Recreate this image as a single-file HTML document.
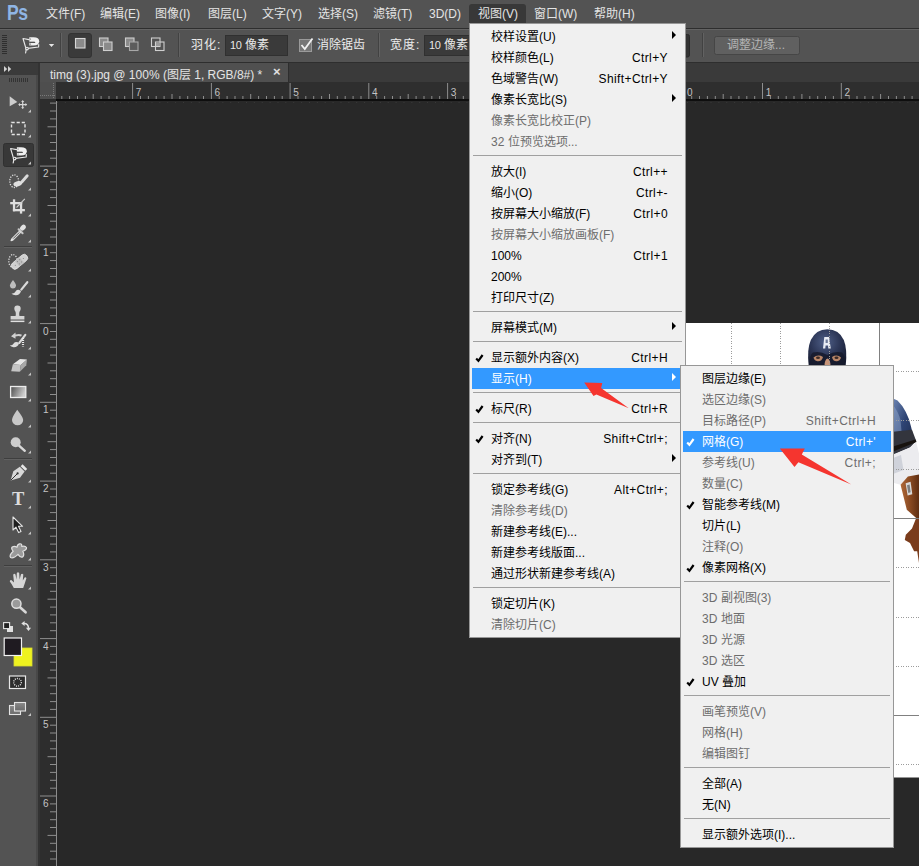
<!DOCTYPE html>
<html lang="zh-CN">
<head>
<meta charset="utf-8">
<title>Photoshop - 视图 - 显示 - 网格</title>
<style>
*{box-sizing:border-box;margin:0;padding:0}
html,body{width:919px;height:866px;overflow:hidden;background:#282828}
body{font-family:"Liberation Sans",sans-serif;font-size:12px;color:#dcdcdc;position:relative}
#app{position:absolute;left:0;top:0;width:919px;height:866px;overflow:hidden;background:#282828}
.abs{position:absolute}
/* ---------- menubar ---------- */
#menubar{position:absolute;left:0;top:0;width:919px;height:29px;background:#535353;border-bottom:1px solid #2e2e2e}
#menubar .mi{position:absolute;top:0;height:28px;line-height:29px;color:#e4e4e4;font-size:12px;white-space:nowrap;letter-spacing:0}
#ps{position:absolute;left:7px;top:1px;font-size:22px;font-weight:bold;color:#8fb5e4;letter-spacing:-0.5px;line-height:24px;transform:scaleX(0.8);transform-origin:0 0}
#mactive{position:absolute;left:469px;top:4px;width:57px;height:21px;background:#383838;border-radius:3px 3px 0 0}
/* ---------- options bar ---------- */
#optbar{position:absolute;left:0;top:29px;width:919px;height:34px;background:#535353;border-top:1px solid #636363;border-bottom:1px solid #2e2e2e}
#optbar .lbl{position:absolute;top:0;height:32px;line-height:32px;color:#ececec;white-space:nowrap}
.inp{position:absolute;top:5px;height:21px;background:#3a3a3a;border:1px solid #303030;color:#e8e8e8;line-height:19px;padding-left:4px;white-space:nowrap;overflow:hidden}
/* ---------- tab bar ---------- */
#tabbar{position:absolute;left:40px;top:63px;width:879px;height:19px;background:#3a3a3a}
#tab{position:absolute;left:0;top:0;width:249px;height:19px;background:#505050;color:#e4e4e4;line-height:24px;padding-left:10px;white-space:nowrap;border-right:1px solid #2e2e2e}
/* ---------- toolbox ---------- */
#toolbox{position:absolute;left:0;top:62px;width:39px;height:804px;background:#535353;border-right:1px solid #3a3a3a}
/* ---------- rulers ---------- */
/* ---------- menus ---------- */
.menu{position:absolute;background:#f0f0f0;border:1px solid #979797;padding:2px;color:#000;font-size:12px}
.menu .it{position:relative;height:21px;line-height:22px;white-space:nowrap}
.menu .it .t{position:absolute;left:19px;top:0}
.menu .it .k{position:absolute;right:15px;top:0;letter-spacing:0.4px}
.menu .it.dis{color:#6d6d6d}
.menu .it.hl{background:#3399ff;color:#fff}
.menu .sep{position:relative;height:9px}
.menu .sep:before{content:"";position:absolute;left:1px;right:1px;top:3px;height:1px;background:#a0a0a0}
.menu .ar{position:absolute;right:7px;top:5px;width:0;height:0;border-left:4px solid #000;border-top:4px solid transparent;border-bottom:4px solid transparent}
.menu .it.hl .ar{border-left-color:#fff}
.menu .ck{position:absolute;left:3px;top:6px;width:10px;height:10px}
</style>
</head>
<body>
<div id="app">

<!-- canvas image -->
<svg class="abs" style="left:683px;top:322px" width="236" height="457" viewBox="683 322 236 457">
<rect x="683" y="323" width="236" height="454.500" fill="#fff"/>
<defs><radialGradient id="hg" cx="0.45" cy="0.35" r="0.7"><stop offset="0" stop-color="#4f5f88"/><stop offset="0.55" stop-color="#2c3656"/><stop offset="1" stop-color="#171c30"/></radialGradient>
<linearGradient id="sh" x1="0" y1="0" x2="1" y2="1"><stop offset="0" stop-color="#6d86b4"/><stop offset="0.5" stop-color="#2e4474"/><stop offset="1" stop-color="#1d2b4c"/></linearGradient>
<linearGradient id="gl" x1="0" y1="0" x2="1" y2="0"><stop offset="0" stop-color="#b06a3a"/><stop offset="0.5" stop-color="#8a4a22"/><stop offset="1" stop-color="#5e2e12"/></linearGradient></defs>
<path d="M808.700 366 Q806.800 349 810.800 340 Q816 329.200 827.300 329.200 Q839 329.200 843.800 340 Q847.500 349 845.700 366 Z" fill="url(#hg)"/><path d="M809.500 366 Q809.500 354 813 352.500 Q820 350.500 827.300 355 Q835 350.500 842 352.500 Q845 354 845 366Z" fill="#161a2b" opacity=".85"/>
<path d="M823 348.500 L824.300 337 H829 L830.800 348.500 H828.300 L828 345.500 H825.600 L825.300 348.500Z" fill="#e8ecf4"/><rect x="825.600" y="339.500" width="2.200" height="3.500" fill="#6f7c9a"/>
<path d="M813.500 357.500 Q818 353.800 823 357 Q822 361.500 817.500 361.200 Q814 360.500 813.500 357.500Z" fill="#b98668"/><path d="M832 357 Q837 353.800 841 357.500 Q840.500 360.500 837 361.200 Q832.800 361.500 832 357Z" fill="#b98668"/>
<ellipse cx="818" cy="357.800" rx="2" ry="1.300" fill="#3a2a26"/><ellipse cx="836.500" cy="357.800" rx="2" ry="1.300" fill="#3a2a26"/>
<path d="M824.500 366 Q824.500 359.500 827.500 358.500 Q830.500 359.500 830.500 366Z" fill="#c79478"/>
<path d="M893 398.500 L897.500 400.600 Q903 406 905.800 412 Q909.500 419 911 426.600 L914.100 440.100 L893 446 Z" fill="url(#sh)"/>
<path d="M893 405 Q898 411 900.500 420 L901.500 431 L893 433Z" fill="#8aa0c6" opacity=".55"/>
<path d="M893 431.800 L912 429.700 L916.200 441.100 L910 447.400 L893 455 Z" fill="#33353d"/>
<path d="M893 446.500 L915.500 439.500 L916.500 442 L893 451.500Z" fill="#17130f"/>
<path d="M893 454.600 L910 447.400 L916.200 442.200 L919 453.600 V477 L907.900 477.500 L900.600 484.800 L893 482.700Z" fill="#ececef"/>
<path d="M893 458 L901 455 L903.500 470 L893 474Z" fill="#cfd2da"/>
<path d="M900.600 484.800 L907.900 476.500 L919 474.400 V518 H916.200 L906.800 509.700 Z" fill="url(#gl)"/>
<path d="M905.600 483.200 L910.600 481.800 L912.300 494.200 L907.600 495.600Z" fill="#d9d9d9"/><path d="M907 485.200 L909.600 484.500 L910.600 492.200 L908.300 492.900Z" fill="#7d7d7d"/>
<path d="M916.200 518 H919 V563 L917.200 551.300 L914.100 551.300 L910 543 L904.800 539.900 L905.800 534.700 L912 528.500Z" fill="#7a3c1c"/>
<path d="M731.5 323V777.500M780.7 323V777.500M829.9 323V777.500M683 371.0H919M683 420.2H919M683 469.4H919M683 567.9H919M683 617.1H919M683 666.3H919M683 764.7H919" stroke="#9c9c9c" stroke-width="1" stroke-dasharray="1 1.500" fill="none" shape-rendering="crispEdges"/>
<path d="M879.1 323V777.500M683 518.6H919M683 715.5H919" stroke="#808080" stroke-width="1" fill="none" shape-rendering="crispEdges"/>
</svg>

<!-- rulers -->
<svg class="abs" style="left:40px;top:82px" width="879" height="784" viewBox="40 82 879 784">
<rect x="40" y="99" width="16" height="767" fill="#2d2d2d"/>
<rect x="56" y="101" width="1" height="765" fill="#8c8c8c"/>
<path d="M50 103.1H56M50 111.0H56M50 118.9H56M47.500 126.8H56M50 134.6H56M50 142.5H56M50 150.4H56M50 158.2H56M40 166.1H56M50 174.0H56M50 181.9H56M50 189.7H56M50 197.6H56M47.500 205.5H56M50 213.4H56M50 221.2H56M50 229.1H56M50 237.0H56M40 244.9H56M50 252.7H56M50 260.6H56M50 268.5H56M50 276.4H56M47.500 284.2H56M50 292.1H56M50 300.0H56M50 307.9H56M50 315.7H56M40 323.6H56M50 331.5H56M50 339.3H56M50 347.2H56M50 355.1H56M47.500 363.0H56M50 370.8H56M50 378.7H56M50 386.6H56M50 394.5H56M40 402.3H56M50 410.2H56M50 418.1H56M50 426.0H56M50 433.8H56M47.500 441.7H56M50 449.6H56M50 457.5H56M50 465.3H56M50 473.2H56M40 481.1H56M50 489.0H56M50 496.8H56M50 504.7H56M50 512.6H56M47.500 520.5H56M50 528.3H56M50 536.2H56M50 544.1H56M50 551.9H56M40 559.8H56M50 567.7H56M50 575.6H56M50 583.4H56M50 591.3H56M47.500 599.2H56M50 607.1H56M50 614.9H56M50 622.8H56M50 630.7H56M40 638.6H56M50 646.4H56M50 654.3H56M50 662.2H56M50 670.1H56M47.500 677.9H56M50 685.8H56M50 693.7H56M50 701.6H56M50 709.4H56M40 717.3H56M50 725.2H56M50 733.0H56M50 740.9H56M50 748.8H56M47.500 756.7H56M50 764.5H56M50 772.4H56M50 780.3H56M50 788.2H56M40 796.0H56M50 803.9H56M50 811.8H56M50 819.7H56M50 827.5H56M47.500 835.4H56M50 843.3H56M50 851.2H56M50 859.0H56" stroke="#8e8e8e" stroke-width="1"/>
<g font-family="Liberation Sans,sans-serif" font-size="10" fill="#c4c4c4"><text x="43" y="177.1">2</text><text x="43" y="255.9">1</text><text x="43" y="334.6">0</text><text x="43" y="413.3">1</text><text x="43" y="492.1">2</text><text x="43" y="570.8">3</text><text x="43" y="649.6">4</text><text x="43" y="728.3">5</text><text x="43" y="807.0">6</text></g>
<rect x="40" y="82" width="879" height="17" fill="#2e2e2e"/>
<rect x="56" y="99" width="863" height="2" fill="#0e0e0e"/>
<rect x="40" y="82" width="16" height="17" fill="#4e4e4e"/><path d="M53.500 83V99M40 95.500H56" stroke="#7a7a7a" stroke-width="1" stroke-dasharray="1 1" fill="none"/>
<path d="M61.8 96V99M69.6 96V99M77.5 96V99M85.4 96V99M93.2 94V99M101.1 96V99M109.0 96V99M116.9 96V99M124.7 96V99M132.6 83V99M140.5 96V99M148.4 96V99M156.2 96V99M164.1 96V99M172.0 94V99M179.9 96V99M187.7 96V99M195.6 96V99M203.5 96V99M211.4 83V99M219.2 96V99M227.1 96V99M235.0 96V99M242.9 96V99M250.7 94V99M258.6 96V99M266.5 96V99M274.4 96V99M282.2 96V99M290.1 83V99M298.0 96V99M305.8 96V99M313.7 96V99M321.6 96V99M329.5 94V99M337.3 96V99M345.2 96V99M353.1 96V99M361.0 96V99M368.8 83V99M376.7 96V99M384.6 96V99M392.5 96V99M400.3 96V99M408.2 94V99M416.1 96V99M424.0 96V99M431.8 96V99M439.7 96V99M447.6 83V99M455.5 96V99M463.3 96V99M471.2 96V99M479.1 96V99M486.9 94V99M494.8 96V99M502.7 96V99M510.6 96V99M518.4 96V99M526.3 83V99M534.2 96V99M542.1 96V99M549.9 96V99M557.8 96V99M565.7 94V99M573.6 96V99M581.4 96V99M589.3 96V99M597.2 96V99M605.1 83V99M612.9 96V99M620.8 96V99M628.7 96V99M636.6 96V99M644.4 94V99M652.3 96V99M660.2 96V99M668.1 96V99M675.9 96V99M683.8 83V99M691.7 96V99M699.5 96V99M707.4 96V99M715.3 96V99M723.2 94V99M731.0 96V99M738.9 96V99M746.8 96V99M754.7 96V99M762.5 83V99M770.4 96V99M778.3 96V99M786.2 96V99M794.0 96V99M801.9 94V99M809.8 96V99M817.7 96V99M825.5 96V99M833.4 96V99M841.3 83V99M849.2 96V99M857.0 96V99M864.9 96V99M872.8 96V99M880.6 94V99M888.5 96V99M896.4 96V99M904.3 96V99M912.1 96V99" stroke="#8e8e8e" stroke-width="1"/>
<g font-family="Liberation Sans,sans-serif" font-size="10" fill="#c4c4c4"><text x="135.8" y="96">7</text><text x="214.6" y="96">6</text><text x="293.3" y="96">5</text><text x="372.0" y="96">4</text><text x="450.8" y="96">3</text><text x="529.5" y="96">2</text><text x="608.3" y="96">1</text><text x="687.0" y="96">0</text><text x="765.7" y="96">1</text><text x="844.5" y="96">2</text></g>
<path d="M57 102.500H919" stroke="#3a3a3a" stroke-width="1" stroke-dasharray="1 6.874"/>
</svg>

<!-- tab bar -->
<div id="tabbar"><div id="tab">timg (3).jpg @ 100% (图层 1, RGB/8#) *<span style="position:absolute;left:233px;top:-3px;font-size:13px;font-weight:bold;color:#e0e0e0">×</span></div></div>

<!-- toolbox -->
<div id="toolbox"></div>
<div class="abs" style="left:36px;top:75px;width:2px;height:791px;background:#484848"></div>
<div class="abs" style="left:38px;top:62px;width:2px;height:804px;background:#333"></div>
<svg class="abs" style="left:0;top:62px" width="40" height="804" viewBox="0 62 40 804">
<rect x="0" y="63" width="38" height="12" fill="#3a3a3a"/>
<path d="M4 66 l3.2 3 l-3.2 3 z M8 66 l3.2 3 l-3.2 3 z" fill="#d0d0d0"/>
<g stroke="#333" stroke-width="1"><path d="M9.5 78 v4"/><path d="M11.5 78 v4"/><path d="M13.5 78 v4"/><path d="M15.5 78 v4"/><path d="M17.5 78 v4"/><path d="M19.5 78 v4"/><path d="M21.5 78 v4"/><path d="M23.5 78 v4"/><path d="M25.5 78 v4"/><path d="M27.5 78 v4"/></g>
<path d="M9.7 96.3 L17.3 101.9 L9.7 106.2 Z" fill="#cdcdcd"/>
<g stroke="#d6d6d6" stroke-width="1.2" fill="#d6d6d6"><path d="M19 104.6 H26.4 M22.7 100.9 V108.3"/><path d="M18.2 104.6 l1.8 -1.6 v3.2z M27.2 104.6 l-1.8 -1.6 v3.2z M22.7 100.1 l-1.6 1.8 h3.2z M22.7 109.1 l-1.6 -1.8 h3.2z" stroke="none"/></g>
<path d="M31 109.4 V112.4 H28 Z" fill="#c4c4c4"/>
<rect x="11.5" y="122.5" width="13.5" height="12" fill="none" stroke="#e4e4e4" stroke-width="1.4" stroke-dasharray="3.2 1.9"/>
<path d="M31 134.4 V137.4 H28 Z" fill="#c4c4c4"/>
<rect x="3.5" y="143.500" width="30" height="23" rx="2" fill="#383838" stroke="#303030"/>
<g transform="translate(-12.4 110)"><g fill="none" stroke="#e8e8e8" stroke-width="1.15" stroke-linejoin="round" stroke-linecap="round"><path d="M29 39.6 L23 38.5 L26 48.6 L38.600 47 L38.700 44.500"/><path d="M26.300 48.800 L25.600 53"/><circle cx="27" cy="48.500" r="1.300" fill="#383838"/></g><path d="M29.300 37.200 H33.500 Q39.200 37.200 39.200 41.200 Q39.200 45.400 33.500 45.400 H29.300 Z" fill="#f0f0f0"/><path d="M29.300 41.700 H34.500 Q36 42 35 42.800 H29.300Z" fill="#1c1c1c"/><circle cx="30.500" cy="39" r=".6" fill="#666"/><circle cx="30.500" cy="44" r=".6" fill="#666"/></g>
<path d="M31 161.4 V164.4 H28 Z" fill="#c4c4c4"/>
<ellipse cx="14.2" cy="181.2" rx="4.4" ry="6.3" fill="none" stroke="#e0e0e0" stroke-width="1.3" stroke-dasharray="1.2 1.3"/>
<path d="M27.200 175.800 L22 181.800" stroke="#dadada" stroke-width="2.900" stroke-linecap="round"/>
<ellipse cx="17.800" cy="183.700" rx="4.500" ry="2.500" transform="rotate(-14 17.800 183.700)" fill="#dedede"/>
<path d="M31 187.4 V190.4 H28 Z" fill="#c4c4c4"/>
<g fill="#dedede"><rect x="12.9" y="199.3" width="2.3" height="12"/><rect x="10.2" y="202" width="12" height="2.3"/><rect x="19.9" y="202" width="2.3" height="11.6"/><rect x="12.9" y="209" width="12" height="2.300"/></g><path d="M24.800 198.800 L16.500 207.500" stroke="#d0d0d0" stroke-width="1.1"/>
<path d="M31 213.4 V216.4 H28 Z" fill="#c4c4c4"/>
<g stroke-linecap="round"><path d="M23.6 227 L22.2 228.400" stroke="#e2e2e2" stroke-width="4.600"/><path d="M18.600 229.300 L22.600 233.300" stroke="#c8c8c8" stroke-width="2"/><path d="M19.8 232 L12.3 239.500" stroke="#d8d8d8" stroke-width="2.800"/><path d="M19 232.800 L13.500 238.300" stroke="#555" stroke-width="0.900"/><path d="M12 239.800 L11.200 240.600" stroke="#e8e8e8" stroke-width="1.400"/></g>
<path d="M31 239.4 V242.4 H28 Z" fill="#c4c4c4"/>
<path d="M4 246.500 H32" stroke="#3e3e3e"/><path d="M4 247.500 H32" stroke="#616161"/>
<ellipse cx="13" cy="261" rx="4.2" ry="6.4" fill="none" stroke="#e0e0e0" stroke-width="1.3" stroke-dasharray="1.2 1.3"/>
<g transform="rotate(-40 19.500 261.800)"><rect x="10" y="258.300" width="19" height="7" rx="3.400" fill="#cfcfcf" stroke="#e4e4e4" stroke-width="0.800"/><rect x="16.500" y="258.300" width="6" height="7" fill="#bdbdbd"/><g fill="#777"><circle cx="18" cy="260.300" r=".5"/><circle cx="21" cy="260.300" r=".5"/><circle cx="18" cy="263.300" r=".5"/><circle cx="21" cy="263.300" r=".5"/><circle cx="24.500" cy="261.800" r=".5"/><circle cx="14" cy="261.800" r=".5"/></g></g>
<path d="M31 268.4 V271.4 H28 Z" fill="#c4c4c4"/>
<path d="M13 280 Q16.500 284.500 16 286 A3.100 3.100 0 0 1 9.900 286 Q9.600 284.500 13 280Z" fill="#bdbdbd"/>
<path d="M27.300 282.200 L21.300 289.600" stroke="#dadada" stroke-width="2.200" stroke-linecap="round"/>
<path d="M11.500 293.800 Q15 293.300 16.800 290 Q19.500 289 21 291.200 Q19.500 295.500 15.500 295.200 Q13 295 11.500 293.800Z" fill="#dcdcdc"/>
<path d="M31 294.4 V297.4 H28 Z" fill="#c4c4c4"/>
<path d="M17.600 305.600 a3.100 3.100 0 0 1 3.100 3.100 q0 1.600 -1.300 3.200 q-.5 1.800 0 4.200 h5 v3.300 h-13.800 v-3.300 h5 q.5 -2.400 0 -4.200 q-1.300 -1.600 -1.300 -3.200 a3.100 3.100 0 0 1 3.300 -3.100z" fill="#d4d4d4"/><rect x="10.600" y="320.600" width="13.800" height="1.500" fill="#e0e0e0"/>
<path d="M31 320.4 V323.4 H28 Z" fill="#c4c4c4"/>
<path d="M11 336.300 l4.500 -3.800 v2 q4 -1.200 6.500 .3 l-1 1.600 q-2.500 -1 -5.500 0 v2.300z" fill="#d0d0d0"/>
<path d="M25.300 334.800 L19.300 342.800" stroke="#dadada" stroke-width="2.200" stroke-linecap="round"/>
<path d="M9.800 345.600 Q13 345.300 14.800 342.300 Q17.500 341.200 19 343.400 Q17.500 347.500 13.500 347.200 Q11 347 9.800 345.600Z" fill="#dcdcdc"/>
<path d="M23 338 V346.500" stroke="#e8e8e8" stroke-width="2.200" stroke-dasharray="1 1"/>
<path d="M31 346.4 V349.4 H28 Z" fill="#c4c4c4"/>
<path d="M12.900 364.300 L20 359 L27 359.600 L20.800 364.900Z" fill="#e6e6e6"/><path d="M12.900 364.300 L20.800 364.900 L19.800 371.800 L11.200 371.200Z" fill="#c4c4c4"/><path d="M20.800 364.900 L27 359.600 L26.300 365.300 L19.800 371.800Z" fill="#a8a8a8"/>
<path d="M31 372.4 V375.4 H28 Z" fill="#c4c4c4"/>
<defs><linearGradient id="gr" x1="0" y1="0" x2="1" y2="0.300"><stop offset="0" stop-color="#4a4a4a"/><stop offset="1" stop-color="#cfcfcf"/></linearGradient></defs><rect x="10.600" y="386.500" width="15.200" height="11" fill="url(#gr)" stroke="#ececec" stroke-width="1.300"/>
<path d="M31 398.4 V401.4 H28 Z" fill="#c4c4c4"/>
<path d="M17.200 409.800 Q23.300 417.500 23.200 420 A5.600 5.200 0 0 1 12 420 Q11.800 417.500 17.200 409.800Z" fill="#c8c8c8"/>
<path d="M31 424.4 V427.4 H28 Z" fill="#c4c4c4"/>
<path d="M19 445.600 L24.800 450.800" stroke="#d8d8d8" stroke-width="2.400" stroke-linecap="round"/><circle cx="15.700" cy="442.200" r="5" fill="#cdcdcd"/>
<path d="M31 450.4 V453.4 H28 Z" fill="#c4c4c4"/>
<path d="M4 458.500 H32" stroke="#3e3e3e"/><path d="M4 459.500 H32" stroke="#616161"/>
<path d="M10.600 480.400 L13.300 471.300 L19.800 466.800 L24.600 471.600 L20 477.800 Z" fill="#d8d8d8"/><path d="M20.600 466.200 L22.600 464.300 L27.200 468.900 L25.300 470.800Z" fill="#e6e6e6"/><path d="M10.900 480.100 L17.300 473.700" stroke="#333" stroke-width="1"/><circle cx="17.600" cy="473.400" r="1.100" fill="#333"/>
<path d="M31 479.4 V482.4 H28 Z" fill="#c4c4c4"/>
<text x="18.200" y="504.800" text-anchor="middle" font-family="Liberation Serif,serif" font-weight="bold" font-size="18.500" fill="#dcdcdc">T</text>
<path d="M31 505.4 V508.4 H28 Z" fill="#c4c4c4"/>
<path d="M13 517 V530 L16 527.200 L18.600 532.600 L21 531.500 L18.500 526.300 L22.600 526.300Z" fill="#1e1e1e" stroke="#e4e4e4" stroke-width="1.100" stroke-linejoin="round"/>
<path d="M31 531.4 V534.4 H28 Z" fill="#c4c4c4"/>
<path d="M19.500 543.800 Q22 543.300 21.800 546.500 Q25 545.500 26.500 547.500 Q26.800 550 22.800 551.300 Q24.800 555 22.600 557 Q20.500 558 18 554.300 Q13.500 558.800 10.600 557.500 Q8.800 555.500 13.200 551.300 Q10.800 548.500 12.200 547 Q14.500 545.800 17 547.300 Q17.300 544.200 19.500 543.800Z" fill="#9a9a9a" stroke="#e0e0e0" stroke-width="1.200" stroke-linejoin="round"/>
<path d="M31 557.4 V560.4 H28 Z" fill="#c4c4c4"/>
<path d="M4 565.500 H32" stroke="#3e3e3e"/><path d="M4 566.500 H32" stroke="#616161"/>
<path d="M13.800 588 Q11.500 583.500 9.800 581.500 Q9.600 579.800 11.300 580 L14 582.500 L13.200 574.800 Q14.200 573 15.500 574.600 L16.500 579.500 L16.800 573 Q18 571.600 19.200 573 L19.600 579.500 L21 574.200 Q22.300 573 23.300 574.400 L22.800 580.600 L24.600 577.500 Q26 576.800 26.400 578.300 Q25 583 23.200 588 Z" fill="#d6d6d6"/>
<path d="M31 586.4 V589.4 H28 Z" fill="#c4c4c4"/>
<path d="M20 607.300 L25.600 612.300" stroke="#d8d8d8" stroke-width="2.600" stroke-linecap="round"/><circle cx="16.400" cy="603.700" r="4.600" fill="#9a9a9a" stroke="#dedede" stroke-width="1.500"/>
<rect x="7" y="626" width="6" height="6" fill="#e0e0e0"/><rect x="3.600" y="622.600" width="6" height="6" fill="#222" stroke="#e6e6e6" stroke-width="1.100"/>
<path d="M24 623.500 q4.500 0 4.500 5" fill="none" stroke="#e0e0e0" stroke-width="1.500"/><path d="M21.300 623.500 l3.300 -2.600 v5.200z M28.500 631 l-2.600 -3.300 h5.200z" fill="#e0e0e0"/>
<rect x="14" y="648" width="18" height="18" fill="#eef21f" stroke="#d8dc30" stroke-width="0.800"/>
<rect x="4.200" y="638" width="17.300" height="17.500" fill="#1f1b21" stroke="#f2f2f2" stroke-width="1.200"/>
<rect x="9.500" y="676" width="16" height="12.500" fill="#2c2c2c" stroke="#e8e8e8" stroke-width="1.200"/><circle cx="17.500" cy="682.300" r="3.800" fill="none" stroke="#f0f0f0" stroke-width="1.300" stroke-dasharray="1 1.100"/>
<defs><linearGradient id="g2" x1="0" y1="0" x2="0" y2="1"><stop offset="0" stop-color="#8a8a8a"/><stop offset="1" stop-color="#6a6a6a"/></linearGradient></defs><rect x="9.500" y="705.500" width="11" height="9" fill="url(#g2)" stroke="#e4e4e4" stroke-width="1.100"/><rect x="14.500" y="702.500" width="11" height="8.500" fill="url(#g2)" stroke="#e4e4e4" stroke-width="1.100"/>
<path d="M31 713 V716 H28 Z" fill="#c4c4c4"/>
</svg>

<!-- options bar -->
<div id="optbar">
<svg class="abs" style="left:0;top:0" width="919" height="32" viewBox="0 30 919 32">
 <!-- grip -->
 <g stroke="#2f2f2f" stroke-width="1"><path d="M2 35.5h5M2 37.5h5M2 39.5h5M2 41.5h5M2 43.5h5M2 45.5h5M2 47.5h5M2 49.5h5M2 51.5h5M2 53.5h5"/></g>
 <!-- polygonal lasso icon -->
 <g fill="none" stroke="#e8e8e8" stroke-width="1.15" stroke-linejoin="round" stroke-linecap="round"><path d="M29 39.6 L23 38.5 L26 48.6 L38.600 47 L38.700 44.500"/><path d="M26.300 48.800 L25.600 53"/><circle cx="27" cy="48.500" r="1.300" fill="#535353"/></g><path d="M29.300 37.200 H33.500 Q39.200 37.200 39.200 41.200 Q39.200 45.400 33.500 45.400 H29.300 Z" fill="#f0f0f0"/><path d="M29.300 41.700 H34.500 Q36 42 35 42.800 H29.300Z" fill="#1c1c1c"/><circle cx="30.500" cy="39" r=".6" fill="#666"/><circle cx="30.500" cy="44" r=".6" fill="#666"/>
 <!-- dropdown -->
 <path d="M48.8 44 h5.4 l-2.7 3 z" fill="#e6e6e6"/>
 <!-- separators -->
 <g stroke="#424242" stroke-width="1"><path d="M60.5 33v24M178.5 33v24M378.5 33v24M702.5 33v24"/></g>
 <g stroke="#626262" stroke-width="1"><path d="M61.5 33v24M179.5 33v24M379.5 33v24M703.5 33v24"/></g>
 <!-- selection mode buttons -->
 <rect x="68.5" y="33.5" width="23" height="24" rx="2.5" fill="#3a3a3a" stroke="#333"/>
 <rect x="75.5" y="38.5" width="9.5" height="9.5" fill="#8a8a8a" stroke="#d8d8d8" stroke-width="1.1"/>
 <g stroke="#cfcfcf" stroke-width="1.1">
  <rect x="99.5" y="38" width="8.5" height="8.5" fill="#8a8a8a"/>
  <rect x="103.5" y="42" width="8.5" height="8.5" fill="#8a8a8a"/>
  <rect x="125.5" y="38" width="8.5" height="8.5" fill="#8a8a8a"/>
  <rect x="129.5" y="42" width="8.5" height="8.5" fill="#5c5c5c" stroke="#a8a8a8"/>
  <rect x="151.5" y="38" width="8.5" height="8.5" fill="none"/>
  <rect x="155.5" y="42" width="8.5" height="8.5" fill="none"/>
  <rect x="156" y="42.5" width="3.5" height="3.5" fill="#9a9a9a" stroke="none"/>
 </g>
 <!-- checkbox -->
 <rect x="299.5" y="39.5" width="12" height="12" fill="#777" stroke="#9a9a9a"/>
 <path d="M301.5 45 L304.8 49 L312.5 38.5" fill="none" stroke="#f2f2f2" stroke-width="1.8"/>
 <!-- pressure button remnant -->
 <rect x="660" y="34.500" width="29.5" height="22.500" rx="2" fill="#333" stroke="#2a2a2a"/>
 <!-- refine edge button -->
 <rect x="714.500" y="36.500" width="85" height="18" rx="2" fill="#606060" stroke="#464646"/>
</svg>
<div class="lbl" style="left:191px;top:-1px;letter-spacing:1px">羽化:</div>
<div class="inp" style="left:225px;width:63px"><span style="font-size:11px;letter-spacing:-0.3px">10</span> 像素</div>
<div class="lbl" style="left:317px;top:-1px">消除锯齿</div>
<div class="lbl" style="left:390px;top:-1px;letter-spacing:1px">宽度:</div>
<div class="inp" style="left:424px;width:63px"><span style="font-size:11px;letter-spacing:-0.3px">10</span> 像素</div>
<div class="lbl" style="left:727px;top:-1px;color:#b4b4b4">调整边缘...</div>
</div>

<!-- menubar -->
<div id="menubar">
<div id="ps">Ps</div>
<div id="mactive"></div>
<div class="mi" style="left:46px">文件(F)</div>
<div class="mi" style="left:100px">编辑(E)</div>
<div class="mi" style="left:155px">图像(I)</div>
<div class="mi" style="left:208px">图层(L)</div>
<div class="mi" style="left:262px">文字(Y)</div>
<div class="mi" style="left:318px">选择(S)</div>
<div class="mi" style="left:373px">滤镜(T)</div>
<div class="mi" style="left:429px">3D(D)</div>
<div class="mi" style="left:478px">视图(V)</div>
<div class="mi" style="left:534px">窗口(W)</div>
<div class="mi" style="left:594px">帮助(H)</div>
</div>

<div class="menu" id="menu1" style="left:469px;top:23px;width:217px">
<div class="it"><span class="t">校样设置(U)</span><span class="ar"></span></div>
<div class="it"><span class="t">校样颜色(L)</span><span class="k">Ctrl+Y</span></div>
<div class="it"><span class="t">色域警告(W)</span><span class="k">Shift+Ctrl+Y</span></div>
<div class="it"><span class="t">像素长宽比(S)</span><span class="ar"></span></div>
<div class="it dis"><span class="t">像素长宽比校正(P)</span></div>
<div class="it dis"><span class="t">32 位预览选项...</span></div>
<div class="sep"></div>
<div class="it"><span class="t">放大(I)</span><span class="k">Ctrl++</span></div>
<div class="it"><span class="t">缩小(O)</span><span class="k">Ctrl+-</span></div>
<div class="it"><span class="t">按屏幕大小缩放(F)</span><span class="k">Ctrl+0</span></div>
<div class="it dis"><span class="t">按屏幕大小缩放画板(F)</span></div>
<div class="it"><span class="t">100%</span><span class="k">Ctrl+1</span></div>
<div class="it"><span class="t">200%</span></div>
<div class="it"><span class="t">打印尺寸(Z)</span></div>
<div class="sep"></div>
<div class="it"><span class="t">屏幕模式(M)</span><span class="ar"></span></div>
<div class="sep"></div>
<div class="it"><svg class="ck" viewBox="0 0 10 10"><path d="M1.2 5.600 L3.400 7.900 L7.600 2" fill="none" stroke="currentColor" stroke-width="2.200"/></svg><span class="t">显示额外内容(X)</span><span class="k">Ctrl+H</span></div>
<div class="it hl"><span class="t">显示(H)</span><span class="ar"></span></div>
<div class="sep"></div>
<div class="it"><svg class="ck" viewBox="0 0 10 10"><path d="M1.2 5.600 L3.400 7.900 L7.600 2" fill="none" stroke="currentColor" stroke-width="2.200"/></svg><span class="t">标尺(R)</span><span class="k">Ctrl+R</span></div>
<div class="sep"></div>
<div class="it"><svg class="ck" viewBox="0 0 10 10"><path d="M1.2 5.600 L3.400 7.900 L7.600 2" fill="none" stroke="currentColor" stroke-width="2.200"/></svg><span class="t">对齐(N)</span><span class="k">Shift+Ctrl+;</span></div>
<div class="it"><span class="t">对齐到(T)</span><span class="ar"></span></div>
<div class="sep"></div>
<div class="it"><span class="t">锁定参考线(G)</span><span class="k">Alt+Ctrl+;</span></div>
<div class="it dis"><span class="t">清除参考线(D)</span></div>
<div class="it"><span class="t">新建参考线(E)...</span></div>
<div class="it"><span class="t">新建参考线版面...</span></div>
<div class="it"><span class="t">通过形状新建参考线(A)</span></div>
<div class="sep"></div>
<div class="it"><span class="t">锁定切片(K)</span></div>
<div class="it dis"><span class="t">清除切片(C)</span></div>
</div>
<div class="menu" id="menu2" style="left:680px;top:365px;width:214px">
<div class="it"><span class="t">图层边缘(E)</span></div>
<div class="it dis"><span class="t">选区边缘(S)</span></div>
<div class="it dis"><span class="t">目标路径(P)</span><span class="k">Shift+Ctrl+H</span></div>
<div class="it hl"><svg class="ck" viewBox="0 0 10 10"><path d="M1.2 5.600 L3.400 7.900 L7.600 2" fill="none" stroke="currentColor" stroke-width="2.200"/></svg><span class="t">网格(G)</span><span class="k">Ctrl+'</span></div>
<div class="it dis"><span class="t">参考线(U)</span><span class="k">Ctrl+;</span></div>
<div class="it dis"><span class="t">数量(C)</span></div>
<div class="it"><svg class="ck" viewBox="0 0 10 10"><path d="M1.2 5.600 L3.400 7.900 L7.600 2" fill="none" stroke="currentColor" stroke-width="2.200"/></svg><span class="t">智能参考线(M)</span></div>
<div class="it"><span class="t">切片(L)</span></div>
<div class="it dis"><span class="t">注释(O)</span></div>
<div class="it"><svg class="ck" viewBox="0 0 10 10"><path d="M1.2 5.600 L3.400 7.900 L7.600 2" fill="none" stroke="currentColor" stroke-width="2.200"/></svg><span class="t">像素网格(X)</span></div>
<div class="sep"></div>
<div class="it dis"><span class="t">3D 副视图(3)</span></div>
<div class="it dis"><span class="t">3D 地面</span></div>
<div class="it dis"><span class="t">3D 光源</span></div>
<div class="it dis"><span class="t">3D 选区</span></div>
<div class="it"><svg class="ck" viewBox="0 0 10 10"><path d="M1.2 5.600 L3.400 7.900 L7.600 2" fill="none" stroke="currentColor" stroke-width="2.200"/></svg><span class="t">UV 叠加</span></div>
<div class="sep"></div>
<div class="it dis"><span class="t">画笔预览(V)</span></div>
<div class="it dis"><span class="t">网格(H)</span></div>
<div class="it dis"><span class="t">编辑图钉</span></div>
<div class="sep"></div>
<div class="it"><span class="t">全部(A)</span></div>
<div class="it"><span class="t">无(N)</span></div>
<div class="sep"></div>
<div class="it"><span class="t">显示额外选项(I)...</span></div>
</div>
<svg class="abs" style="left:570px;top:370px;z-index:50" width="300" height="130" viewBox="570 370 300 130">
<path d="M584.200 382.400 L602.300 383.100 L601.100 388 L628.800 408.300 L596.400 394.400 L593.500 395.900 Z" fill="#f5352f"/>
<path d="M779.800 448.500 L804.800 448.500 L801.800 454.400 L851.300 484.500 L798.400 462.200 L794.500 467.100 Z" fill="#f5352f"/>
</svg>

</div>
</body>
</html>
